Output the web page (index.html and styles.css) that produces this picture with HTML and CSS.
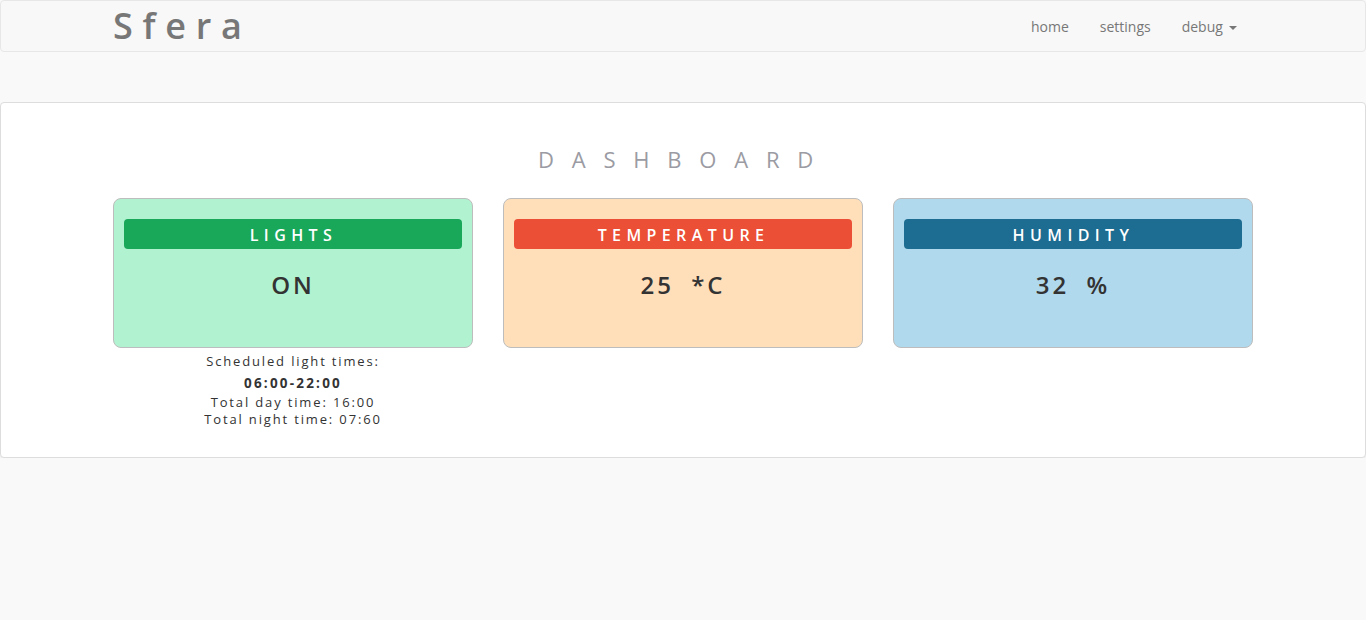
FILE: index.html
```html
<!DOCTYPE html>
<html>
<head>
<meta charset="utf-8">
<title>Sfera</title>
<link rel="stylesheet" href="styles.css">
</head>
<body>
<nav class="navbar">
  <div class="container nav-inner">
    <a class="brand">Sfera</a>
    <ul class="nav">
      <li><a>home</a></li>
      <li><a>settings</a></li>
      <li><a>debug <span class="caret"></span></a></li>
    </ul>
  </div>
</nav>
<div class="panel">
  <h1 class="title">DASHBOARD</h1>
  <div class="container cards">
    <div class="col">
      <div class="card card-green">
        <div class="card-head">LIGHTS</div>
        <div class="card-value">ON</div>
      </div>
      <div class="info">
        <div class="info-line">Scheduled light times:</div>
        <div class="info-line info-bold">06:00-22:00</div>
        <div class="info-line">Total day time: 16:00</div>
        <div class="info-line">Total night time: 07:60</div>
      </div>
    </div>
    <div class="col">
      <div class="card card-orange">
        <div class="card-head">TEMPERATURE</div>
        <div class="card-value">25 *C</div>
      </div>
    </div>
    <div class="col">
      <div class="card card-blue">
        <div class="card-head">HUMIDITY</div>
        <div class="card-value">32 %</div>
      </div>
    </div>
  </div>
</div>
</body>
</html>
```
FILE: styles.css
```css
* { box-sizing: border-box; }
html, body { margin: 0; padding: 0; }
body {
  background: #f9f9f9;
  font-family: "Open Sans", "Liberation Sans", sans-serif;
  font-size: 14px;
  color: #333;
}
.container {
  width: 1170px;
  margin: 0 auto;
  padding: 0 15px;
}
.navbar {
  height: 52px;
  background: #f8f8f8;
  border: 1px solid #e7e7e7;
  border-radius: 4px;
}
.nav-inner {
  display: flex;
  justify-content: space-between;
  align-items: center;
  height: 50px;
}
.brand {
  font-size: 36px;
  font-weight: 600;
  letter-spacing: 9.7px;
  color: #777;
  line-height: 50px;
  margin-top: -1px;
}
.nav {
  display: flex;
  list-style: none;
  margin: 0 1px 0 0;
  padding: 0;
}
.nav a {
  display: block;
  padding: 16px 15.5px 14px;
  line-height: 20px;
  color: #777;
  font-size: 14px;
}
.caret {
  display: inline-block;
  width: 0;
  height: 0;
  margin-left: 2px;
  vertical-align: middle;
  border-top: 4px solid #777;
  border-left: 4px solid transparent;
  border-right: 4px solid transparent;
}
.panel {
  margin-top: 50px;
  background: #fff;
  border: 1px solid #ddd;
  border-radius: 4px;
  box-shadow: 0 1px 1px rgba(0,0,0,0.05);
  padding: 0 0 29px;
}
.title {
  margin: 0;
  padding-top: 41px;
  height: 95px;
  text-align: center;
  font-size: 22px;
  font-weight: 400;
  letter-spacing: 17.8px;
  line-height: 30px;
  color: #9b9ba3;
  text-indent: 3px;
}
.cards {
  display: flex;
  gap: 30px;
}
.col {
  width: 360px;
}
.card {
  height: 150px;
  border: 1px solid #bdbdbd;
  border-radius: 8px;
  padding: 20px 10px 0;
}
.card-head {
  height: 30px;
  border-radius: 4px;
  color: #fff;
  text-align: center;
  font-size: 16px;
  font-weight: 600;
  letter-spacing: 5.4px;
  line-height: 32px;
  text-indent: 1px;
}
.card-value {
  text-align: center;
  font-size: 24px;
  font-weight: 600;
  letter-spacing: 3px;
  word-spacing: 8px;
  margin-top: 21px;
  line-height: 30px;
  color: #333;
}
.card-green { background: #b1f2d0; }
.card-green .card-head { background: #19a75a; }
.card-orange { background: #ffdfba; }
.card-orange .card-head { background: #eb4f36; }
.card-blue { background: #b1d9ed; }
.card-blue .card-head { background: #1d6c91; }
.info {
  text-align: center;
  font-size: 13px;
  letter-spacing: 1.85px;
  color: #333;
  padding-top: 5px;
}
.info-line { line-height: 17px; }
.info-bold {
  font-weight: 700;
  font-size: 13.5px;
  letter-spacing: 2.2px;
  margin: 5px 0 2px;
}
```
